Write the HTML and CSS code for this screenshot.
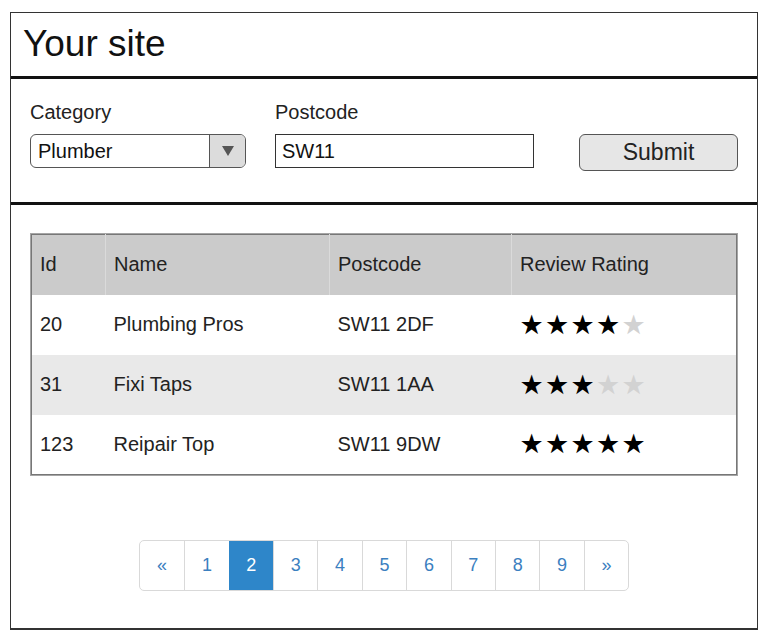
FILE: index.html
```html
<!DOCTYPE html>
<html>
<head>
<meta charset="utf-8">
<link rel="stylesheet" href="styles.css">
</head>
<body>
<div class="frame">
  <header class="site-header"><h1 class="title">Your site</h1></header>
  <section class="search">
    <div class="field">
      <label class="label">Category</label>
      <div class="select"><span class="select-value">Plumber</span><span class="select-btn"><svg width="14" height="12" viewBox="0 0 14 12"><path d="M1 1h12L7 11z" fill="#555"/></svg></span></div>
    </div>
    <div class="field">
      <label class="label">Postcode</label>
      <div class="input">SW11</div>
    </div>
    <button class="submit">Submit</button>
  </section>
  <section class="results">
    <table class="table">
      <thead>
        <tr><th class="c-id">Id</th><th class="c-name">Name</th><th class="c-pc">Postcode</th><th class="c-rate">Review Rating</th></tr>
      </thead>
      <tbody>
        <tr><td>20</td><td>Plumbing Pros</td><td>SW11 2DF</td><td><span class="stars"><i class="on">★</i><i class="on">★</i><i class="on">★</i><i class="on">★</i><i class="off">★</i></span></td></tr>
        <tr class="alt"><td>31</td><td>Fixi Taps</td><td>SW11 1AA</td><td><span class="stars"><i class="on">★</i><i class="on">★</i><i class="on">★</i><i class="off">★</i><i class="off">★</i></span></td></tr>
        <tr><td>123</td><td>Reipair Top</td><td>SW11 9DW</td><td><span class="stars"><i class="on">★</i><i class="on">★</i><i class="on">★</i><i class="on">★</i><i class="on">★</i></span></td></tr>
      </tbody>
    </table>
    <nav class="pager">
      <a class="page">«</a><a class="page">1</a><a class="page active">2</a><a class="page">3</a><a class="page">4</a><a class="page">5</a><a class="page">6</a><a class="page">7</a><a class="page">8</a><a class="page">9</a><a class="page">»</a>
    </nav>
  </section>
</div>
</body>
</html>
```

FILE: styles.css
```css
* { box-sizing: border-box; }
html, body { margin: 0; padding: 0; background: #fff; }
body { font-family: "Liberation Sans", Arial, sans-serif; color: #222; }

.frame {
  margin: 12px 0 0 10px;
  width: 748px;
  height: 618px;
  border: 1px solid #333;
  border-bottom: 2px solid #333;
  display: flex;
  flex-direction: column;
}

.site-header {
  height: 66px;
  border-bottom: 3px solid #111;
  display: flex;
  align-items: center;
  padding-left: 12px;
}
.title {
  margin: 0;
  font-weight: normal;
  font-size: 37px;
  color: #111;
  line-height: 1;
  position: relative;
  top: -1px;
}

.search {
  height: 126px;
  border-bottom: 3px solid #111;
  display: flex;
  align-items: flex-start;
  padding: 22px 19px 0 19px;
  gap: 29px;
}
.field { display: flex; flex-direction: column; }
.label { font-size: 20px; line-height: 22px; color: #222; margin-bottom: 11px; }

.select {
  width: 216px;
  height: 34px;
  border: 1px solid #555;
  border-radius: 6px;
  display: flex;
  overflow: hidden;
}
.select-value { flex: 1; font-size: 20px; line-height: 32px; padding-left: 7px; color: #111; }
.select-btn {
  width: 36px;
  background: #dcdcdc;
  border-left: 1px solid #555;
  display: flex;
  align-items: center;
  justify-content: center;
}

.input {
  width: 259px;
  height: 34px;
  border: 1px solid #333;
  font-size: 20px;
  line-height: 32px;
  padding-left: 6px;
  color: #111;
}

.submit {
  margin-left: auto;
  margin-top: 33px;
  width: 159px;
  height: 37px;
  border: 1px solid #555;
  border-radius: 6px;
  background: #e6e6e6;
  font-family: "Liberation Sans", Arial, sans-serif;
  font-size: 23px;
  color: #222;
  padding: 0;
}

.results {
  flex: 1;
  padding: 29px 20px 0 20px;
  display: flex;
  flex-direction: column;
  align-items: center;
}

.table {
  width: 706px;
  border-collapse: collapse;
  border: 1px solid #777;
  box-shadow: 0 0 0 1px #a5a5a5;
  font-size: 20px;
  color: #222;
}
.table th, .table td {
  height: 60px;
  padding: 0 8px;
  text-align: left;
  font-weight: normal;
  vertical-align: middle;
}
.table thead tr { background: #cbcbcb; }
.table th + th { border-left: 1px solid #dadada; }
.table tbody tr { background: #fff; }
.table tbody tr.alt { background: #e9e9e9; }
.c-id { width: 74px; }
.c-name { width: 224px; }
.c-pc { width: 182px; }

.stars { display: inline-flex; gap: 0; font-size: 27px; line-height: 1; font-family: "DejaVu Sans", sans-serif; }
.stars i { font-style: normal; width: 25.5px; }
.stars .on { color: #000; }
.stars .off { color: #d2d2d2; }

.pager {
  margin-top: 65px;
  display: flex;
  border: 1px solid #d9d9d9;
  border-radius: 5px;
  overflow: hidden;
}
.page {
  width: 44.4px;
  height: 49px;
  display: flex;
  align-items: center;
  justify-content: center;
  font-size: 18px;
  color: #3b80c0;
}
.page + .page { border-left: 1px solid #d9d9d9; }
.page.active { background: #2e86c9; color: #fff; border-left-color: #2e86c9; }
```
